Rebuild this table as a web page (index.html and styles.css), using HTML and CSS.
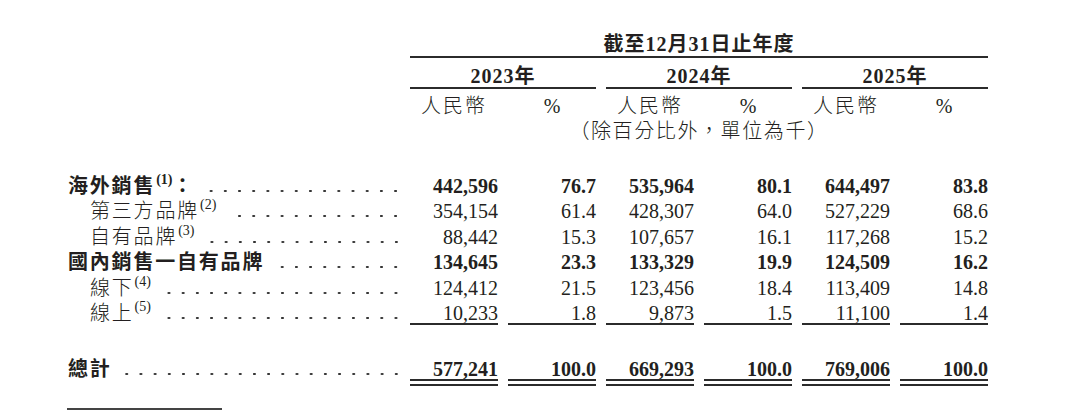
FILE: index.html
```html
<!DOCTYPE html>
<html lang="zh-Hant">
<head>
<meta charset="utf-8">
<title>收入明細</title>
<link rel="stylesheet" href="styles.css">
</head>
<body>
<div class="sheet">
  <div class="blank"></div>
  <div class="period">截至12月31日止年度</div>

  <div class="blank"></div>
  <div class="year">2023年</div>
  <div class="year">2024年</div>
  <div class="year">2025年</div>

  <div class="blank"></div>
  <div class="unit cjk">人民幣</div>
  <div class="unit pct">%</div>
  <div class="unit cjk">人民幣</div>
  <div class="unit pct">%</div>
  <div class="unit cjk">人民幣</div>
  <div class="unit pct">%</div>

  <div class="blank"></div>
  <div class="note">（除百分比外，單位為千）</div>

  <div class="label strong"><span class="label-text">海外銷售<sup>(1)</sup>：</span><span class="leader"></span></div>
  <div class="num strong">442,596</div>
  <div class="num strong">76.7</div>
  <div class="num strong">535,964</div>
  <div class="num strong">80.1</div>
  <div class="num strong">644,497</div>
  <div class="num strong">83.8</div>

  <div class="label sub"><span class="label-text">第三方品牌<sup>(2)</sup></span><span class="leader"></span></div>
  <div class="num">354,154</div>
  <div class="num">61.4</div>
  <div class="num">428,307</div>
  <div class="num">64.0</div>
  <div class="num">527,229</div>
  <div class="num">68.6</div>

  <div class="label sub"><span class="label-text">自有品牌<sup>(3)</sup></span><span class="leader"></span></div>
  <div class="num">88,442</div>
  <div class="num">15.3</div>
  <div class="num">107,657</div>
  <div class="num">16.1</div>
  <div class="num">117,268</div>
  <div class="num">15.2</div>

  <div class="label strong"><span class="label-text">國內銷售一自有品牌</span><span class="leader"></span></div>
  <div class="num strong">134,645</div>
  <div class="num strong">23.3</div>
  <div class="num strong">133,329</div>
  <div class="num strong">19.9</div>
  <div class="num strong">124,509</div>
  <div class="num strong">16.2</div>

  <div class="label sub"><span class="label-text">線下<sup>(4)</sup></span><span class="leader"></span></div>
  <div class="num">124,412</div>
  <div class="num">21.5</div>
  <div class="num">123,456</div>
  <div class="num">18.4</div>
  <div class="num">113,409</div>
  <div class="num">14.8</div>

  <div class="label sub"><span class="label-text">線上<sup>(5)</sup></span><span class="leader"></span></div>
  <div class="num rule">10,233</div>
  <div class="num rule">1.8</div>
  <div class="num rule">9,873</div>
  <div class="num rule">1.5</div>
  <div class="num rule">11,100</div>
  <div class="num rule">1.4</div>

  <div class="label strong total"><span class="label-text">總計</span><span class="leader"></span></div>
  <div class="num strong total dbl">577,241</div>
  <div class="num strong total dbl">100.0</div>
  <div class="num strong total dbl">669,293</div>
  <div class="num strong total dbl">100.0</div>
  <div class="num strong total dbl">769,006</div>
  <div class="num strong total dbl">100.0</div>
</div>
<div class="footnote-rule"></div>
</body>
</html>
```

FILE: styles.css
```css
* {
  box-sizing: border-box;
  margin: 0;
  padding: 0;
}

body {
  background: #ffffff;
  color: #231f20;
  font-family: "Liberation Serif", "Noto Sans CJK TC", serif;
  font-size: 20px;
}

.sheet {
  display: grid;
  grid-template-columns: 332px repeat(6, 88px);
  column-gap: 10px;
  padding: 32px 0 0 68px;
}

.blank {
  grid-column: 1;
}

.period {
  grid-column: 2 / 8;
  text-align: center;
  font-weight: 700;
  line-height: 24px;
  letter-spacing: 1px;
  border-bottom: 2px solid #2b2b2b;
}

.year {
  grid-column: span 2;
  text-align: center;
  font-weight: 700;
  padding-top: 7px;
  line-height: 22px;
  letter-spacing: 1px;
  border-bottom: 2px solid #2b2b2b;
}

.unit {
  text-align: center;
  padding-top: 5px;
  line-height: 24px;
}

.unit.cjk {
  letter-spacing: 2px;
  font-weight: 300;
}

.note {
  grid-column: 2 / 8;
  text-align: center;
  line-height: 26px;
  letter-spacing: 1.6px;
  padding-bottom: 26px;
  font-weight: 300;
}

.label {
  grid-column: 1;
  display: flex;
  padding-top: 5.5px;
  line-height: 20px;
}

.label-text {
  white-space: nowrap;
  letter-spacing: 1.8px;
}

.sub .label-text {
  padding-left: 22px;
  font-weight: 300;
}

.label-text sup {
  font-size: 14px;
  line-height: 0;
  vertical-align: 9px;
  letter-spacing: 0;
  margin-left: 1px;
  font-weight: 400;
}

.strong .label-text sup {
  font-weight: 700;
}

.leader {
  flex: 1;
  margin-left: 12px;
  background: radial-gradient(circle, #333333 0 1px, rgba(51, 51, 51, 0) 1.5px) right -3px top 13px / 14.2px 4px repeat-x;
}

.num {
  text-align: right;
  padding-top: 5.5px;
  line-height: 20px;
  white-space: nowrap;
}

.strong {
  font-weight: 700;
}

.rule {
  border-bottom: 2px solid #2b2b2b;
}

.total {
  padding-top: 34px;
}

.dbl {
  padding-bottom: 5px;
  border-bottom: 2px solid #2b2b2b;
  background: linear-gradient(#2b2b2b, #2b2b2b) left 0 bottom 3px / 100% 2px no-repeat;
}

.footnote-rule {
  width: 155px;
  margin: 22px 0 0 67px;
  border-top: 2px solid #444444;
}
```
